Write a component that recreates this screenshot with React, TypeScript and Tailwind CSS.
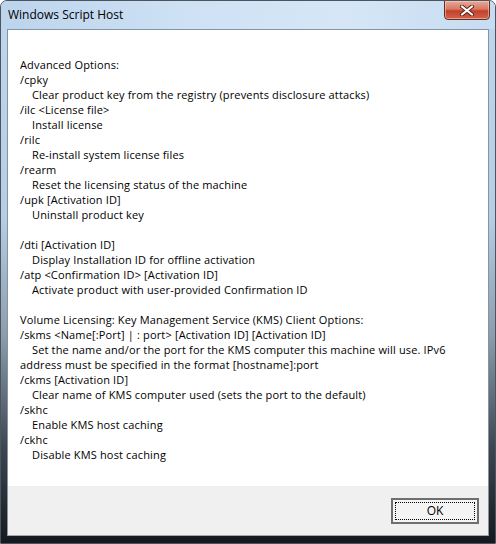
import React from "react";

const lines: { t: string; i?: boolean }[] = [
  { t: "Advanced Options:" },
  { t: "/cpky" },
  { t: "Clear product key from the registry (prevents disclosure attacks)", i: true },
  { t: "/ilc <License file>" },
  { t: "Install license", i: true },
  { t: "/rilc" },
  { t: "Re-install system license files", i: true },
  { t: "/rearm" },
  { t: "Reset the licensing status of the machine", i: true },
  { t: "/upk [Activation ID]" },
  { t: "Uninstall product key", i: true },
  { t: "" },
  { t: "/dti [Activation ID]" },
  { t: "Display Installation ID for offline activation", i: true },
  { t: "/atp <Confirmation ID> [Activation ID]" },
  { t: "Activate product with user-provided Confirmation ID", i: true },
  { t: "" },
  { t: "Volume Licensing: Key Management Service (KMS) Client Options:" },
  { t: "/skms <Name[:Port] | : port> [Activation ID] [Activation ID]" },
  { t: "Set the name and/or the port for the KMS computer this machine will use. IPv6", i: true },
  { t: "address must be specified in the format [hostname]:port" },
  { t: "/ckms [Activation ID]" },
  { t: "Clear name of KMS computer used (sets the port to the default)", i: true },
  { t: "/skhc" },
  { t: "Enable KMS host caching", i: true },
  { t: "/ckhc" },
  { t: "Disable KMS host caching", i: true },
];

export default function App() {
  return (
    <div
      className="w-[496px] h-[544px] relative overflow-hidden rounded-t-[7px] border border-[#4b5560] flex flex-col bg-[linear-gradient(180deg,#bfd6ee_0%,#b6cde4_40%,#8c9cab_62%,#3e4852_82%,#15191d_100%)]"
      style={{ fontFamily: '"Open Sans", "Noto Sans", sans-serif' }}
    >
      {/* title bar */}
      <div className="h-[28px] shrink-0 flex items-center pl-[7px] bg-[linear-gradient(90deg,#bcd4ec_0%,#cfe2f5_40%,#d6e6f7_70%,#c6dcf1_100%)]">
        <span className="text-[12px] text-black leading-none">Windows Script Host</span>
      </div>
      {/* close button */}
      <div className="absolute top-[-1px] right-[5px] w-[46px] h-[20px] rounded-b-[4px] border border-[#6b2a20] bg-[linear-gradient(180deg,#e8a99a_0%,#d97763_45%,#c2402a_55%,#d0644c_100%)] flex items-center justify-center shadow-[inset_0_0_0_1px_rgba(255,220,210,0.5)]">
        <svg width="14" height="11" viewBox="0 0 14 11">
          <path d="M2 1.5 L12 9.5 M12 1.5 L2 9.5" stroke="#5a2018" strokeWidth="4" strokeLinecap="round" />
          <path d="M2 1.5 L12 9.5 M12 1.5 L2 9.5" stroke="#ffffff" strokeWidth="2.2" strokeLinecap="round" />
        </svg>
      </div>
      {/* client */}
      <div className="flex-1 mx-[6px] flex flex-col border border-[#8394a6] border-b-[#a0a8b0]">
        <div className="flex-1 bg-white pt-[27px] pl-[12px] text-[11px] text-black leading-[15px] tracking-[0.15px]">
          {lines.map((l, k) => (
            <div key={k} className={"h-[15px] whitespace-nowrap " + (l.i ? "pl-[12px]" : "")}>
              {l.t}
            </div>
          ))}
        </div>
        <div className="h-[49px] shrink-0 bg-[#f0f0f0] flex items-start justify-end pt-[12px] pr-[9px]">
          <div className="w-[88px] h-[26px] border-2 border-[#6f6f6f] bg-[#f4f4f4] p-[2px]">
            <div className="w-full h-full border border-dotted border-black flex items-center justify-center text-[12px] text-black">
              OK
            </div>
          </div>
        </div>
      </div>
      <div className="h-[7px] shrink-0" />
    </div>
  );
}
